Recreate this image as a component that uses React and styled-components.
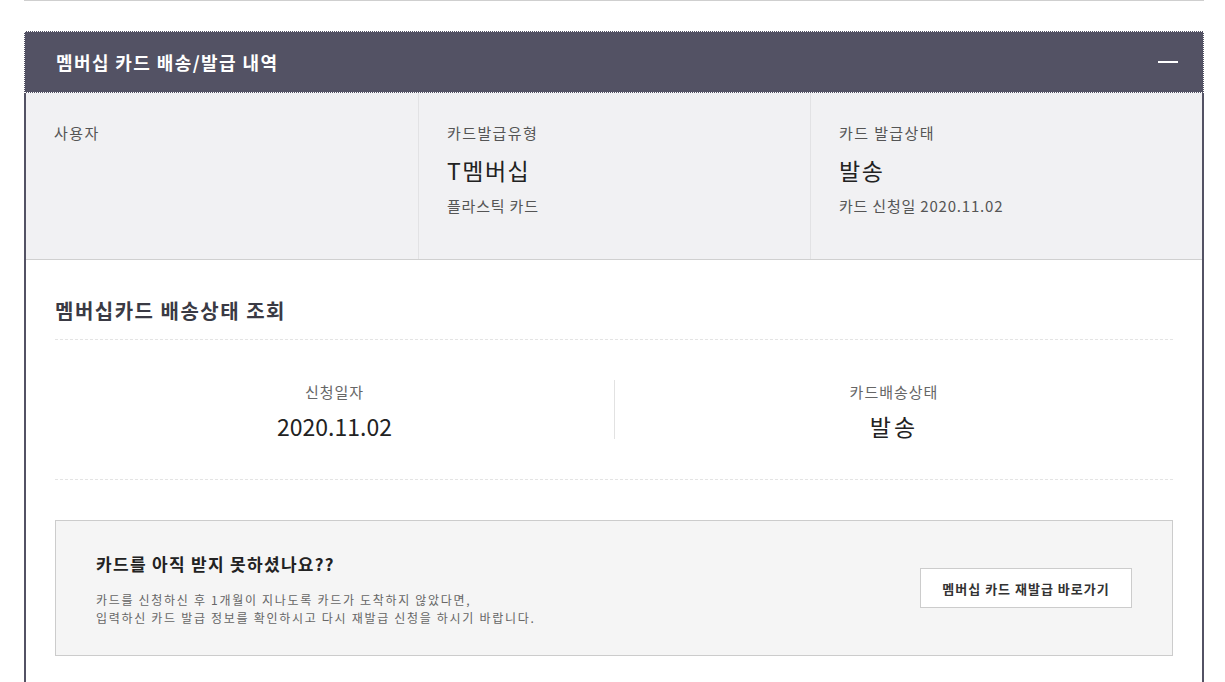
import styled, { createGlobalStyle } from "styled-components";

const GlobalStyle = createGlobalStyle`
    html, body {
        margin: 0;
        padding: 0;
        background: #fff;
    }

    body {
        font-family: "Noto Sans CJK KR", "Noto Sans", sans-serif;
        color: #333;
    }
`;

const infoColumns = [
    { label: "사용자" },
    { label: "카드발급유형", value: "T멤버십", sub: "플라스틱 카드" },
    { label: "카드 발급상태", value: "발송", sub: "카드 신청일 2020.11.02" },
];

const deliveryColumns = [
    { label: "신청일자", value: "2020.11.02", spacing: 0 },
    { label: "카드배송상태", value: "발송", spacing: 3 },
];

const App = () => {
    return (
        <Page>
            <GlobalStyle />
            <TopLine />

            <Panel>
                <Header tabIndex={0}>
                    <HeaderTitle>멤버십 카드 배송/발급 내역</HeaderTitle>
                    <Collapse aria-label="접기" />
                </Header>

                <InfoRow>
                    {infoColumns.map((col) => (
                        <InfoCol key={col.label}>
                            <InfoLabel>{col.label}</InfoLabel>
                            {col.value && <InfoValue>{col.value}</InfoValue>}
                            {col.sub && <InfoSub>{col.sub}</InfoSub>}
                        </InfoCol>
                    ))}
                </InfoRow>

                <Body>
                    <SectionTitle>멤버십카드 배송상태 조회</SectionTitle>

                    <StatusRow>
                        {deliveryColumns.map((col) => (
                            <StatusCol key={col.label}>
                                <StatusLabel>{col.label}</StatusLabel>
                                <StatusValue $spacing={col.spacing}>{col.value}</StatusValue>
                            </StatusCol>
                        ))}
                    </StatusRow>

                    <NoticeBox>
                        <NoticeText>
                            <NoticeTitle>카드를 아직 받지 못하셨나요??</NoticeTitle>
                            <NoticeDesc>
                                카드를 신청하신 후 1개월이 지나도록 카드가 도착하지 않았다면,
                                <br />
                                입력하신 카드 발급 정보를 확인하시고 다시 재발급 신청을 하시기 바랍니다.
                            </NoticeDesc>
                        </NoticeText>
                        <ReissueButton type="button">멤버십 카드 재발급 바로가기</ReissueButton>
                    </NoticeBox>
                </Body>
            </Panel>
        </Page>
    );
};

export default App;

const Page = styled.div`
    width: 1180px;
    margin-left: 24px;
`;

const TopLine = styled.div`
    height: 1px;
    background: #cfcfcf;
    margin-bottom: 30px;
`;

const Panel = styled.section`
    border: 2px solid #535264;
    border-top: none;
    border-bottom: none;
    padding-bottom: 26px;
`;

const Header = styled.div`
    height: 62px;
    margin: 0 -2px;
    padding: 0 26px 0 32px;
    background: #535264;
    display: flex;
    align-items: center;
    justify-content: space-between;
    outline: 1px dotted #fff;
    outline-offset: -1px;
`;

const HeaderTitle = styled.h2`
    margin: 0;
    color: #fff;
    font-size: 18px;
    font-weight: 700;
    line-height: 24px;
    letter-spacing: 1.4px;
`;

const Collapse = styled.button`
    width: 20px;
    height: 2px;
    padding: 0;
    border: none;
    background: #fff;
    cursor: pointer;
`;

const InfoRow = styled.div`
    display: grid;
    grid-template-columns: repeat(3, 1fr);
    background: #f1f1f3;
    border-bottom: 1px solid #d0d0d0;
    height: 167px;
    box-sizing: border-box;
`;

const InfoCol = styled.div`
    padding: 30px 28px 0;
    border-left: 1px solid #e2e2e4;

    &:first-child {
        border-left: none;
    }
`;

const InfoLabel = styled.div`
    font-size: 15px;
    line-height: 20px;
    color: #555;
    letter-spacing: 1.4px;
`;

const InfoValue = styled.div`
    margin-top: 12px;
    font-size: 23px;
    line-height: 30px;
    color: #222;
    letter-spacing: 1.5px;
`;

const InfoSub = styled.div`
    margin-top: 11px;
    font-size: 15px;
    line-height: 20px;
    color: #555;
    letter-spacing: 0.8px;
`;

const Body = styled.div`
    padding: 37px 29px 0;
`;

const SectionTitle = styled.h3`
    margin: 0;
    padding-bottom: 14px;
    border-bottom: 1px dashed #e4e4e4;
    font-size: 20px;
    font-weight: 700;
    line-height: 28px;
    color: #3a3a44;
    letter-spacing: 1.5px;
`;

const StatusRow = styled.div`
    display: grid;
    grid-template-columns: 1fr 1fr;
    padding: 40px 0 40px;
    border-bottom: 1px dashed #e4e4e4;
`;

const StatusCol = styled.div`
    display: flex;
    flex-direction: column;
    align-items: center;
    height: 59px;

    & + & {
        border-left: 1px solid #e2e2e2;
    }
`;

const StatusLabel = styled.div`
    margin-top: 2px;
    font-size: 15px;
    line-height: 20px;
    color: #666;
    letter-spacing: 1px;
`;

const StatusValue = styled.div`
    margin-top: 9px;
    font-size: 23px;
    line-height: 30px;
    color: #222;
    letter-spacing: ${props => props.$spacing}px;
`;

const NoticeBox = styled.div`
    margin-top: 40px;
    height: 136px;
    box-sizing: border-box;
    padding: 0 40px;
    background: #f5f5f5;
    border: 1px solid #cccccc;
    display: flex;
    align-items: center;
    justify-content: space-between;
`;

const NoticeText = styled.div`
    padding-top: 2px;
`;

const NoticeTitle = styled.div`
    font-size: 17px;
    font-weight: 700;
    line-height: 24px;
    color: #222;
    letter-spacing: 1.3px;
`;

const NoticeDesc = styled.p`
    margin: 15px 0 0;
    font-size: 12px;
    line-height: 18px;
    color: #666;
    letter-spacing: 1.7px;
`;

const ReissueButton = styled.button`
    width: 212px;
    height: 40px;
    background: #fff;
    border: 1px solid #cccccc;
    font-family: inherit;
    font-size: 13px;
    font-weight: 700;
    color: #333;
    letter-spacing: 1px;
    cursor: pointer;
`;
